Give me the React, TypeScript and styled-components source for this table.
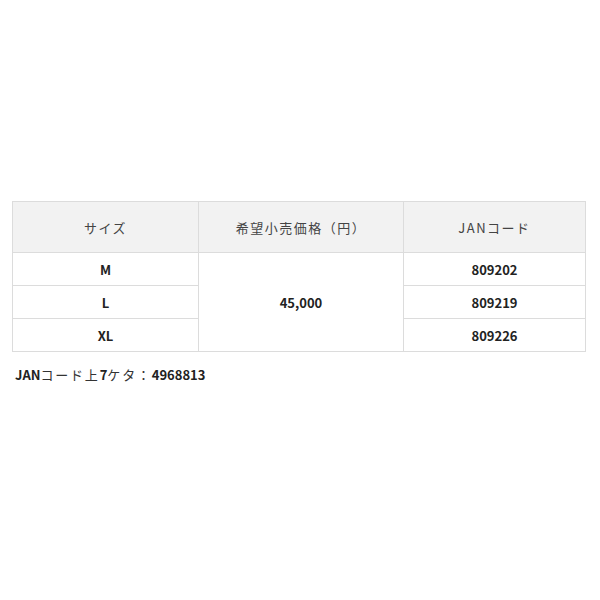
import styled, { createGlobalStyle } from 'styled-components'

const GlobalStyle = createGlobalStyle`
  html, body {
    margin: 0;
    padding: 0;
    background: #fff;
  }
  body {
    font-family: "Noto Sans CJK JP", "Noto Sans", sans-serif;
    color: #222;
  }
`

const Page = styled.div`
  width: 600px;
  padding: 201px 15px 0 12px;
  box-sizing: border-box;
`

const Table = styled.table`
  width: 573px;
  border-collapse: collapse;
  table-layout: fixed;
  font-size: 13px;
`

const HeadCell = styled.th`
  height: 50px;
  background: #f2f2f2;
  border: 1px solid #dcdcdc;
  font-weight: 400;
  color: #444;
  letter-spacing: 1.5px;
  text-align: center;
  padding: 0;
`

const Cell = styled.td`
  height: 32px;
  border: 1px solid #dcdcdc;
  font-weight: 700;
  color: #222;
  text-align: center;
  padding: 0;
`

const Note = styled.p`
  margin: 13px 0 0 3px;
  font-size: 13px;
  font-weight: 700;
  color: #222;
`

const Jp = styled.span`
  font-weight: 400;
  letter-spacing: 1.8px;
  color: #333;
`

const rows = [
  { size: 'M', jan: '809202' },
  { size: 'L', jan: '809219' },
  { size: 'XL', jan: '809226' },
]

export default function App() {
  return (
    <Page>
      <GlobalStyle />
      <Table>
        <colgroup>
          <col style={{ width: 186 }} />
          <col style={{ width: 205 }} />
          <col style={{ width: 182 }} />
        </colgroup>
        <thead>
          <tr>
            <HeadCell>サイズ</HeadCell>
            <HeadCell>希望小売価格（円）</HeadCell>
            <HeadCell>JANコード</HeadCell>
          </tr>
        </thead>
        <tbody>
          {rows.map((r, i) => (
            <tr key={r.size}>
              <Cell>{r.size}</Cell>
              {i === 0 && <Cell rowSpan={3}>45,000</Cell>}
              <Cell>{r.jan}</Cell>
            </tr>
          ))}
        </tbody>
      </Table>
      <Note>
        JAN<Jp>コード上</Jp>7<Jp>ケタ：</Jp>4968813
      </Note>
    </Page>
  )
}
